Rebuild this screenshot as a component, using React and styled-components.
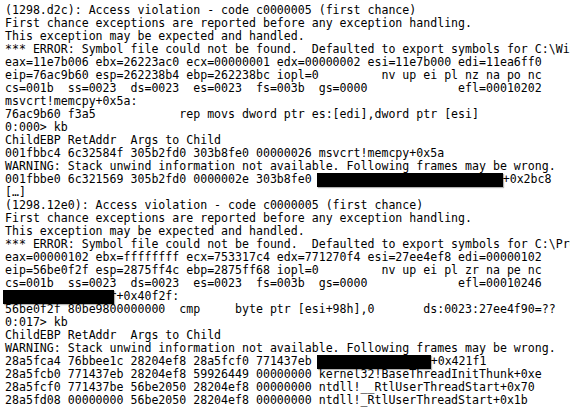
import React from "react";
import styled, { createGlobalStyle } from "styled-components";

const GlobalStyle = createGlobalStyle`
  html, body {
    margin: 0;
    padding: 0;
    background: #ffffff;
  }
`;

const Console = styled.main`
  width: 570px;
  height: 416px;
  overflow: hidden;
  box-sizing: border-box;
  padding: 4px 0 0 5px;
  background: #ffffff;
  color: #000000;
  font-family: "DejaVu Sans Mono", "Liberation Mono", monospace;
  font-size: 11.58px;
  line-height: 13px;
`;

const Line = styled.div`
  height: 13px;
  white-space: pre;
  overflow: visible;
`;

// black box laid over a module name in the dump
const Redact = styled.span`
  position: relative;
  z-index: 1;
  display: inline-block;
  width: ${(p) => p.$w}px;
  height: 14px;
  margin-left: ${(p) => p.$ml || 0}px;
  margin-right: ${(p) => p.$mr || 0}px;
  vertical-align: top;
  background: #000000;
  box-shadow: 1px 1px 1px rgba(0, 0, 0, 0.3);
`;

const firstBlock = [
  "(1298.d2c): Access violation - code c0000005 (first chance)",
  "First chance exceptions are reported before any exception handling.",
  "This exception may be expected and handled.",
  "*** ERROR: Symbol file could not be found.  Defaulted to export symbols for C:\\Windows",
  "eax=11e7b006 ebx=26223ac0 ecx=00000001 edx=00000002 esi=11e7b000 edi=11ea6ff0",
  "eip=76ac9b60 esp=262238b4 ebp=262238bc iopl=0         nv up ei pl nz na po nc",
  "cs=001b  ss=0023  ds=0023  es=0023  fs=003b  gs=0000             efl=00010202",
  "msvcrt!memcpy+0x5a:",
  "76ac9b60 f3a5            rep movs dword ptr es:[edi],dword ptr [esi]",
  "0:000> kb",
  "ChildEBP RetAddr  Args to Child",
  "001fbbc4 6c32584f 305b2fd0 303b8fe0 00000026 msvcrt!memcpy+0x5a",
  "WARNING: Stack unwind information not available. Following frames may be wrong.",
];

const secondBlock = [
  "(1298.12e0): Access violation - code c0000005 (first chance)",
  "First chance exceptions are reported before any exception handling.",
  "This exception may be expected and handled.",
  "*** ERROR: Symbol file could not be found.  Defaulted to export symbols for C:\\Program",
  "eax=00000102 ebx=ffffffff ecx=753317c4 edx=771270f4 esi=27ee4ef8 edi=00000102",
  "eip=56be0f2f esp=2875ff4c ebp=2875ff68 iopl=0         nv up ei pl zr na pe nc",
  "cs=001b  ss=0023  ds=0023  es=0023  fs=003b  gs=0000             efl=00010246",
];

const thirdBlock = [
  "56be0f2f 80be9800000000  cmp     byte ptr [esi+98h],0       ds:0023:27ee4f90=??",
  "0:017> kb",
  "ChildEBP RetAddr  Args to Child",
  "WARNING: Stack unwind information not available. Following frames may be wrong.",
];

const lastFrames = [
  "28a5fcb0 771437eb 28204ef8 59926449 00000000 kernel32!BaseThreadInitThunk+0xe",
  "28a5fcf0 771437be 56be2050 28204ef8 00000000 ntdll!__RtlUserThreadStart+0x70",
  "28a5fd08 00000000 56be2050 28204ef8 00000000 ntdll!_RtlUserThreadStart+0x1b",
];

const App = () => (
  <>
    <GlobalStyle />
    <Console>
      {firstBlock.map((t, i) => (
        <Line key={"a" + i}>{t}</Line>
      ))}
      <Line>
        {"001fbbe0 6c321569 305b2fd0 0000002e 303b8fe0 "}
        <Redact $w={186} $ml={-2} />
        {"+0x2bc8"}
      </Line>
      <Line>[…]</Line>
      {secondBlock.map((t, i) => (
        <Line key={"b" + i}>{t}</Line>
      ))}
      <Line>
        <Redact $w={111} $ml={-2} $mr={-4.4} />
        {"r+0x40f2f:"}
      </Line>
      {thirdBlock.map((t, i) => (
        <Line key={"c" + i}>{t}</Line>
      ))}
      <Line>
        {"28a5fca4 76bbee1c 28204ef8 28a5fcf0 771437eb "}
        <Redact $w={114} $ml={-2} />
        {"+0x421f1"}
      </Line>
      {lastFrames.map((t, i) => (
        <Line key={"d" + i}>{t}</Line>
      ))}
    </Console>
  </>
);

export default App;
